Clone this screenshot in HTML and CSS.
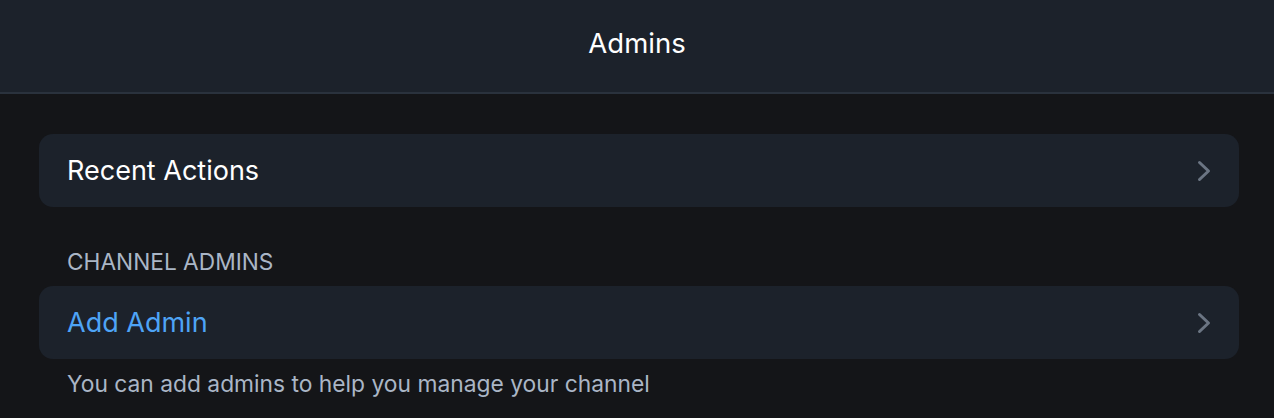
FILE: index.html
```html
<!DOCTYPE html>
<html lang="en">
<head>
    <meta charset="UTF-8">
    <meta name="viewport" content="width=device-width, initial-scale=1.0">
    <title>Admins</title>
    <link rel="stylesheet" href="styles.css">
</head>
<body>
    <!-- top bar -->
    <div class="topBar">Admins</div>

    <div class="content">
        <a class="row" href="javascript:;">
            <span class="rowText">Recent Actions</span>
            <svg class="chevron" width="14" height="22" viewBox="0 0 14 22"><path d="M2.5 2.5l9 8.5-9 8.5" fill="none" stroke="#6b7583" stroke-width="3" stroke-linecap="round" stroke-linejoin="round"/></svg>
        </a>

        <p class="sectionTitle">CHANNEL ADMINS</p>
        <a class="row" href="javascript:;">
            <span class="rowText blue">Add Admin</span>
            <svg class="chevron" width="14" height="22" viewBox="0 0 14 22"><path d="M2.5 2.5l9 8.5-9 8.5" fill="none" stroke="#6b7583" stroke-width="3" stroke-linecap="round" stroke-linejoin="round"/></svg>
        </a>
        <p class="note">You can add admins to help you manage your channel</p>
    </div>
</body>
</html>
```

FILE: styles.css
```css
* {
    padding: 0;
    margin: 0;
}

body {
    background-color: #141518;
    font-family: Inter, "Noto Sans", sans-serif;
    color: #fff;
}

.topBar {
    height: 92px;
    line-height: 86px;
    background-color: #1c222b;
    border-bottom: 2px solid #2a323d;
    text-align: center;
    font-size: 27.5px;
}

.content {
    padding: 40px 35px 0 39px;
}

.row {
    display: flex;
    align-items: center;
    justify-content: space-between;
    height: 73px;
    padding: 0 28px 0 28px;
    background-color: #1c222b;
    border-radius: 14px;
    text-decoration: none;
    color: #fff;
}

.rowText {
    font-size: 27px;
}

.rowText.blue {
    color: #4ea4f6;
}

.chevron {
    display: block;
}

.sectionTitle {
    padding: 40px 0 0 28px;
    height: 39px;
    line-height: 30px;
    font-size: 22.7px;
    color: #aab6c6;
}

.note {
    padding: 10px 0 0 28px;
    line-height: 30px;
    font-size: 22.8px;
    color: #aab6c6;
}
```
